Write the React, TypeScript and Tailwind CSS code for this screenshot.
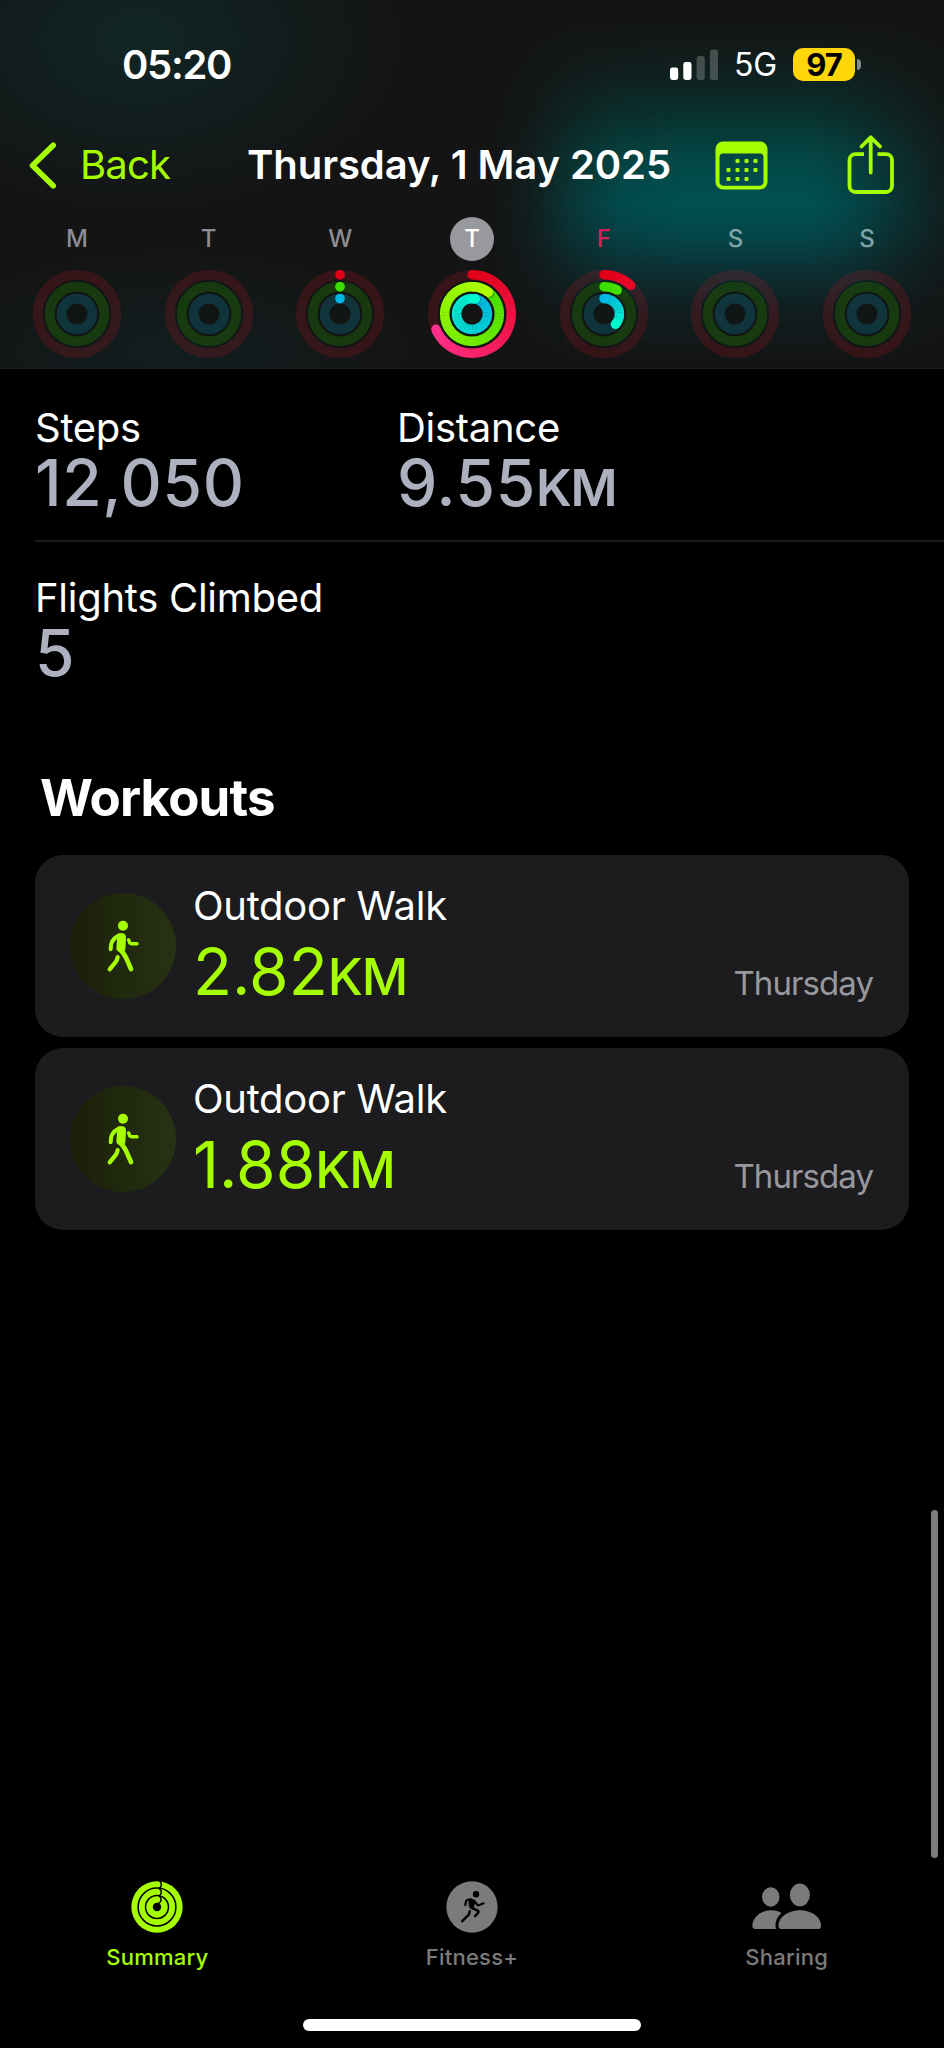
import type { ReactNode } from 'react';

type RGB = [number, number, number];

interface Day {
  label: string;
  // degrees travelled by the move, exercise and stand rings
  rings?: [number, number, number];
  selected?: boolean;
  today?: boolean;
}

const DAYS: Day[] = [
  { label: 'M' },
  { label: 'T' },
  { label: 'W', rings: [0.1, 0.1, 0.1] },
  { label: 'T', rings: [247, 397, 373], selected: true },
  { label: 'F', rings: [43, 29, 132], today: true },
  { label: 'S' },
  { label: 'S' },
];

const WORKOUTS = [
  { id: 1, name: 'Outdoor Walk', value: '2.82', unit: 'KM', day: 'Thursday' },
  { id: 2, name: 'Outdoor Walk', value: '1.88', unit: 'KM', day: 'Thursday' },
];

const RINGS: { r: number; track: string; from: RGB; to: RGB }[] = [
  { r: 39.2, track: 'rgba(250,17,40,0.15)', from: [226, 0, 22], to: [255, 48, 140] },
  { r: 27.3, track: 'rgba(60,220,0,0.19)', from: [58, 222, 0], to: [178, 255, 0] },
  { r: 15.4, track: 'rgba(20,180,220,0.2)', from: [0, 180, 228], to: [0, 250, 208] },
];

function point(r: number, deg: number) {
  const a = ((deg - 90) * Math.PI) / 180;
  return [44 + r * Math.cos(a), 44 + r * Math.sin(a)];
}

function mix(from: RGB, to: RGB, t: number) {
  return `rgb(${from.map((c, i) => Math.round(c + (to[i] - c) * t)).join(',')})`;
}

function RingArc({ r, from, to, deg }: { r: number; from: RGB; to: RGB; deg: number }) {
  const full = deg > 100 ? deg : 300;
  const steps = Math.max(1, Math.ceil(deg / 6));
  const [ex, ey] = point(r, deg);
  const [sx, sy] = point(r, deg + 5);
  return (
    <g>
      <circle cx={44} cy={44 - r} r={4.7} fill={mix(from, to, 0)} />
      {Array.from({ length: steps }, (_, i) => {
        const a = (deg * i) / steps;
        const b = (deg * (i + 1)) / steps;
        const [x1, y1] = point(r, a);
        const [x2, y2] = point(r, Math.min(b + 0.8, deg));
        return (
          <path
            key={i}
            d={`M${x1} ${y1}A${r} ${r} 0 0 1 ${x2} ${y2}`}
            stroke={mix(from, to, b / full)}
            strokeWidth={9.4}
            fill="none"
          />
        );
      })}
      {deg > 360 && <circle cx={sx} cy={sy} r={4.4} fill="rgba(0,0,0,0.22)" />}
      <circle cx={ex} cy={ey} r={4.7} fill={mix(from, to, deg / full)} />
    </g>
  );
}

function ActivityRings({ rings }: { rings?: [number, number, number] }) {
  return (
    <svg viewBox="0 0 88 88" className="mt-[9px] size-[88px]">
      <circle cx={44} cy={44} r={33} fill="#101413" opacity={0.75} />
      {RINGS.map((ring, i) => (
        <g key={i}>
          <circle cx={44} cy={44} r={ring.r} fill="none" stroke={ring.track} strokeWidth={9.8} />
          {rings && <RingArc r={ring.r} from={ring.from} to={ring.to} deg={rings[i]} />}
        </g>
      ))}
    </svg>
  );
}

function StatusBar() {
  return (
    <div className="flex h-[129px] items-center pl-[122px] pr-[83px]">
      <span className="flex-1 text-[40px] font-semibold leading-none tracking-[-0.032em]">05:20</span>
      <svg viewBox="0 0 48 32" className="h-8 w-12">
        <rect x="0" y="18.5" width="8.2" height="12.5" rx="2.4" fill="#fff" />
        <rect x="13.3" y="13" width="8.2" height="18" rx="2.4" fill="#fff" />
        <rect x="26.6" y="7" width="8.2" height="24" rx="2.4" fill="#fff" opacity="0.22" />
        <rect x="39.9" y="0.5" width="8.2" height="30.5" rx="2.4" fill="#fff" opacity="0.22" />
      </svg>
      <span className="ml-4 w-[44px] text-[32px] leading-none tracking-[-0.01em]">5G</span>
      <div className="ml-[15px] flex h-[33px] w-[62px] items-center justify-center rounded-[10px] bg-[#ffd60a] text-[31px] font-bold leading-none tracking-[-0.03em] text-black">
        97
      </div>
      <div className="ml-[2px] h-[11px] w-1 rounded-r-full bg-[#838a8a]" />
    </div>
  );
}

function CalendarIcon() {
  const dots = [
    [22, 19], [31, 19], [40, 19],
    [13, 28], [22, 28], [31, 28], [40, 28],
    [13, 37], [22, 37], [31, 37],
  ];
  return (
    <svg viewBox="0 0 53 49" className="h-[49px] w-[53px]" fill="#a6ff00">
      <path
        fillRule="evenodd"
        d="M8 0.5H45A7.500 7.500 0 0 1 52.500 8V41A7.500 7.500 0 0 1 45 48.500H8A7.500 7.500 0 0 1 0.500 41V8A7.500 7.500 0 0 1 8 0.500ZM8 12.500A3.500 3.500 0 0 0 4.500 16V41A3.500 3.500 0 0 0 8 44.700H45A3.500 3.500 0 0 0 48.500 41V16A3.500 3.500 0 0 0 45 12.500Z"
      />
      {dots.map(([x, y]) => (
        <rect key={`${x}-${y}`} x={x - 1.5} y={y - 1.1} width="4" height="4" rx="1" />
      ))}
    </svg>
  );
}

function ShareIcon() {
  return (
    <svg
      viewBox="0 0 48 60"
      className="h-[60px] w-12"
      fill="none"
      stroke="#a6ff00"
      strokeWidth="3.8"
      strokeLinecap="round"
      strokeLinejoin="round"
    >
      <path strokeLinecap="butt" d="M17 19.200H8.500A6 6 0 0 0 2.500 25.200V51A6 6 0 0 0 8.500 57H39A6 6 0 0 0 45 51V25.200A6 6 0 0 0 39 19.200H30.500" />
      <path d="M23.700 37.500V2.500M14.500 11.500L23.700 2.300L33 11.500" />
    </svg>
  );
}

function WalkIcon() {
  return (
    <svg viewBox="48 140 108 168" className="h-14 w-9" stroke="#a6ff00" fill="none" strokeLinecap="round" strokeLinejoin="round">
      <circle cx="102" cy="163" r="15" fill="#a6ff00" stroke="none" />
      <path
        d="M84 192Q90 185 98 185Q111 186 111 199L109 234Q107 243 97 243Q82 241 82 230L84 207Z"
        fill="#a6ff00"
        stroke="none"
      />
      <path d="M90 192Q76 199 69 211Q65 219 65 234" strokeWidth="12" />
      <path d="M119 206L122 214Q124 217 129 217H144" strokeWidth="10.500" />
      <path d="M92 233Q104 245 111 259L126 293" strokeWidth="14" />
      <path d="M86 257Q85 266 79 273L62 294" strokeWidth="12.500" />
    </svg>
  );
}

function SummaryIcon() {
  return (
    <svg viewBox="0 0 154 154" className="h-[52px] w-[52px]" fill="none" stroke="#000">
      <circle cx="77" cy="77" r="76" fill="#a6ff00" stroke="none" />
      <circle cx="77" cy="77" r="56" strokeWidth="4.500" />
      <circle cx="77" cy="77" r="34" strokeWidth="4.500" />
      <circle cx="77" cy="77" r="12.500" fill="#000" stroke="none" />
      <path d="M84 0Q92 6 89 15Q87 20 82 22M84 23Q92 30 89 37Q87 42 82 44M84 45Q92 52 88 60Q85 66 77 68" strokeWidth="4.500" />
    </svg>
  );
}

function FitnessIcon() {
  return (
    <svg viewBox="0 0 154 154" className="h-[52px] w-[52px]" fill="none" stroke="#000" strokeLinecap="round" strokeLinejoin="round">
      <circle cx="77" cy="77" r="76" fill="#7b7b7b" stroke="none" />
      <circle cx="89" cy="39" r="9.500" fill="#000" stroke="none" />
      <path d="M68 53Q77 51 84 57L85 64L81 81Q78 85 73 81L69 76Z" fill="#000" strokeWidth="2" />
      <path d="M74 55Q63 54 60 58L57 71" strokeWidth="6.500" />
      <path d="M83 58L93 71Q95 73 99 71L111 66" strokeWidth="6.500" />
      <path d="M77 80L94 88Q98 90 95 94L86 104" strokeWidth="7.500" />
      <path d="M70 90Q70 98 63 104L48 119" strokeWidth="7.500" />
    </svg>
  );
}

function SharingIcon() {
  return (
    <svg viewBox="0 0 206 154" className="h-[52px] w-[69px]" fill="#7b7b7b">
      <ellipse cx="56" cy="47" rx="26" ry="29" />
      <path d="M1 134C1 108 26 87 57 87C70 87 80 90 88 95C76 105 70 118 70 132Q70 138 73 143H10Q1 143 1 134Z" />
      <ellipse cx="143" cy="41" rx="30" ry="34" />
      <path d="M79 133C79 108 108 87 143 87C178 87 206 108 206 133Q206 143 196 143H90Q79 143 79 133Z" />
    </svg>
  );
}

function Stat({ label, value, unit }: { label: string; value: string; unit?: string }) {
  return (
    <div className="w-[362px]">
      <p className="text-[40px] leading-[48px] tracking-[-0.007em]">{label}</p>
      <p className="text-[64px] font-medium leading-[62px] tracking-[0.01em] text-[#adb1bf]">
        {value}
        {unit && <span className="text-[51px] font-semibold leading-none tracking-[-0.025em]">{unit}</span>}
      </p>
    </div>
  );
}

function TabItem({ label, icon, active }: { label: string; icon: ReactNode; active?: boolean }) {
  return (
    <button className={`flex flex-1 flex-col items-center ${active ? 'text-[#a6ff00]' : 'text-[#7b7b7b]'}`}>
      {icon}
      <span className="mt-[10px] text-[22px] font-medium leading-7 tracking-[0.01em]">{label}</span>
    </button>
  );
}

export default function App() {
  return (
    <div className="relative flex h-[2048px] w-[944px] flex-col overflow-hidden bg-black font-['Inter',sans-serif] text-white">
      {/* ---- HEADER ---- */}
      <header className="relative isolate h-[369px] border-b border-[#1f1f1f] bg-[#141414] bg-[radial-gradient(ellipse_260px_170px_at_140px_40px,rgba(16,44,44,0.75)_0%,transparent_100%),radial-gradient(ellipse_240px_100px_at_170px_350px,rgba(16,36,38,0.6)_0%,transparent_100%)]">
        {/* colour bleeding through the translucent bar */}
        <div className="absolute inset-y-0 right-0 -z-10 w-[464px] bg-[linear-gradient(to_bottom,rgba(10,50,46,0)_20px,rgba(6,58,54,0.3)_70px,rgba(3,66,61,0.65)_115px,rgba(2,78,76,0.9)_160px,rgba(0,84,86,0.95)_205px,rgba(2,78,82,0.85)_238px,rgba(6,70,76,0.6)_268px,rgba(10,56,62,0.32)_305px,rgba(14,40,44,0)_364px)] [mask-image:linear-gradient(to_right,transparent_10px,rgba(0,0,0,0.18)_50px,rgba(0,0,0,0.6)_95px,rgba(0,0,0,0.9)_140px,#000_200px,#000_330px,rgba(0,0,0,0.85)_370px,rgba(0,0,0,0.5)_420px,rgba(0,0,0,0.2)_464px)]" />
        <StatusBar />

        <div className="flex h-[72px] items-center pl-[29px] pr-[49px]">
          <button className="flex w-[218px] items-center text-[40px] leading-none tracking-[-0.02em] text-[#a6ff00]">
            <svg viewBox="0 0 28 47" className="mr-[23px] h-[47px] w-7" fill="none" stroke="currentColor" strokeWidth="5.600" strokeLinecap="round" strokeLinejoin="round">
              <path d="M24.200 3.300L3.500 23.500L24.200 43.700" />
            </svg>
            Back
          </button>
          <h1 className="flex-1 whitespace-nowrap text-[40px] font-semibold leading-none tracking-[-0.002em]">
            Thursday, 1 May 2025
          </h1>
          <CalendarIcon />
          <div className="ml-[79px]">
            <ShareIcon />
          </div>
        </div>

        <div className="grid grid-cols-7 px-[11px] pt-4">
          {DAYS.map((day, i) => (
            <div key={i} className="flex flex-col items-center">
              <span
                className={`flex size-11 items-center justify-center rounded-full text-[24px] font-medium leading-none ${
                  day.selected ? 'bg-[#98989f] text-white' : day.today ? 'text-[#d91e5b]' : i > 4 ? 'text-[#7fa3a6]' : 'text-[#8d8d93]'
                }`}
              >
                {day.label}
              </span>
              <ActivityRings rings={day.rings} />
            </div>
          ))}
        </div>
      </header>

      {/* ---- CONTENT ---- */}
      <main className="flex-1">
        <section className="pl-[35px]">
          <div className="flex border-b-2 border-[#19191a] pb-[26px] pt-[35px]">
            <Stat label="Steps" value="12,050" />
            <Stat label="Distance" value="9.55" unit="KM" />
          </div>
          <div className="pt-8">
            <Stat label="Flights Climbed" value="5" />
          </div>
        </section>

        <section className="px-[35px] pt-[84px]">
          <h2 className="pl-[5px] text-[51px] font-bold leading-[60px] tracking-[-0.017em]">Workouts</h2>
          <div className="mt-[27px] flex flex-col gap-[11px]">
            {WORKOUTS.map((workout) => (
              <article key={workout.id} className="flex h-[182px] rounded-[28px] bg-[#1c1c1e] pl-[35px] pr-9">
                <div className="flex size-[106px] items-center justify-center self-center rounded-full bg-linear-to-r from-[#1a2008] to-[#273214]">
                  <WalkIcon />
                </div>
                <div className="ml-[17px] flex-1 pt-[27px]">
                  <p className="text-[40px] leading-[48px] tracking-[-0.007em]">{workout.name}</p>
                  <p className="mt-[11px] text-[64px] leading-[62px] text-[#a6ff00]">
                    {workout.value}
                    <span className="text-[51px] font-medium leading-none tracking-[-0.02em]">{workout.unit}</span>
                  </p>
                </div>
                <p className="self-end pb-[34px] text-[33px] leading-10 tracking-[-0.028em] text-[#98989f]">{workout.day}</p>
              </article>
            ))}
          </div>
        </section>
      </main>

      {/* ---- TAB BAR ---- */}
      <footer className="pb-[17px]">
        <nav className="flex">
          <TabItem label="Summary" icon={<SummaryIcon />} active />
          <TabItem label="Fitness+" icon={<FitnessIcon />} />
          <TabItem label="Sharing" icon={<SharingIcon />} />
        </nav>
        <div className="mx-auto mt-12 h-3 w-[338px] rounded-full bg-white" />
      </footer>

      <div className="absolute right-[6px] top-[1510px] h-[348px] w-[7px] rounded-full bg-[#7c7c7c]" />
    </div>
  );
}
